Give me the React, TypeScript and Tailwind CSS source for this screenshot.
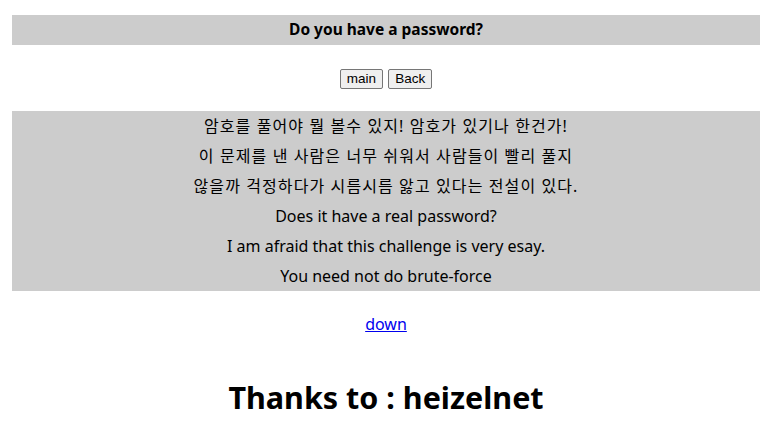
export default function App() {
  const korean = [
    '암호를 풀어야 뭘 볼수 있지! 암호가 있기나 한건가!',
    '이 문제를 낸 사람은 너무 쉬워서 사람들이 빨리 풀지',
    '않을까 걱정하다가 시름시름 앓고 있다는 전설이 있다.',
  ];
  const english = [
    'Does it have a real password?',
    'I am afraid that this challenge is very esay.',
    'You need not do brute-force',
  ];

  const btn =
    'h-[20px] rounded-[2px] border border-[#767676] bg-[#efefef] px-[6px] text-[13.5px] leading-none';

  return (
    <div
      className="min-h-screen bg-white text-black"
      style={{ fontFamily: '"Noto Sans", "Noto Sans CJK KR", sans-serif' }}
    >
      <div className="mx-3 pt-[15px]">
        {/* title bar */}
        <div className="flex h-[30px] items-center justify-center bg-[#cccccc] text-[15.5px] font-bold">
          Do you have a password?
        </div>

        {/* buttons */}
        <div
          className="mt-[24px] flex justify-center gap-[5px]"
          style={{ fontFamily: '"Liberation Sans", Arial, sans-serif' }}
        >
          <button className={btn}>main</button>
          <button className={btn}>Back</button>
        </div>

        {/* description */}
        <div className="mt-[22px] flex flex-col items-center bg-[#cccccc] text-[16px]">
          {korean.map((l) => (
            <div key={l} className="flex h-[30px] items-center tracking-[1.1px]">
              {l}
            </div>
          ))}
          {english.map((l) => (
            <div key={l} className="flex h-[30px] items-center">
              {l}
            </div>
          ))}
        </div>

        <div className="mt-[21px] flex justify-center text-[16px]">
          <a href="#" className="text-[#0000ee] underline">
            down
          </a>
        </div>

        <h1 className="mt-[39px] text-center text-[30.5px] font-bold">Thanks to : heizelnet</h1>
      </div>
    </div>
  );
}
